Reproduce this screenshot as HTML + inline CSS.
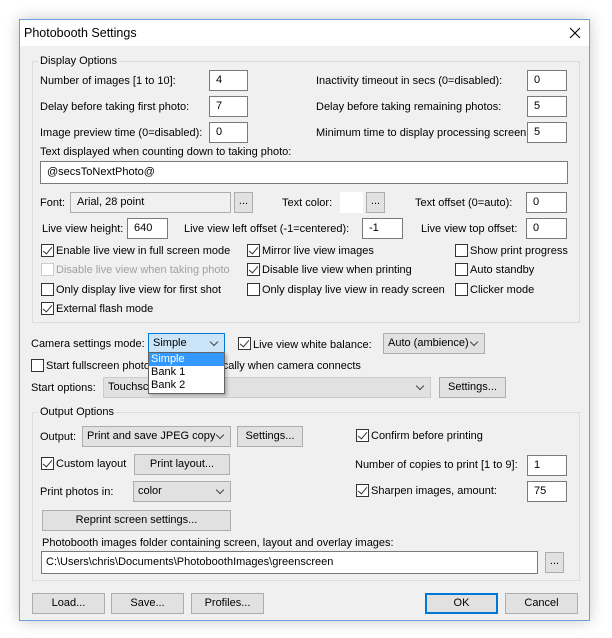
<!DOCTYPE html>
<html><head><meta charset="utf-8"><style>
*{box-sizing:border-box;margin:0;padding:0}
body{width:612px;height:638px;background:#fff;position:relative;overflow:hidden;font-family:"Liberation Sans",sans-serif;font-size:11px;color:#000}
.a{position:absolute;white-space:nowrap}
.win{position:absolute;left:19px;top:19px;width:571px;height:602px;background:#f0f0f0;border:1px solid #6f9fd8;box-shadow:0 0 14px rgba(0,0,0,.22)}
.title{position:absolute;left:19px;top:19px;width:571px;height:27px;background:#fff;border:1px solid #6f9fd8;border-bottom:none}
.grp{position:absolute;border:1px solid #dcdcdc}
.lbl{position:absolute;white-space:nowrap;line-height:14px}
.in{position:absolute;background:#fff;border:1px solid #7a7a7a;height:21px;padding-left:6px;line-height:19px;white-space:nowrap}
.btn{position:absolute;background:#e1e1e1;border:1px solid #adadad;height:21px;text-align:center;line-height:19px}
.sel{position:absolute;background:#e1e1e1;border:1px solid #adadad;height:21px;padding-left:4px;line-height:19px}
.sel:after{content:"";position:absolute;right:7px;top:5px;width:5px;height:5px;border-right:1px solid #444;border-bottom:1px solid #444;transform:rotate(45deg)}
.cb{position:absolute;width:13px;height:13px;border:1px solid #333;background:#fff}
.cb.c:after{content:"";position:absolute;left:3px;top:0px;width:4px;height:8px;border-right:1.5px solid #333;border-bottom:1.5px solid #333;transform:rotate(40deg)}
.gl{background:#f0f0f0;padding:0 2px}
</style></head><body>
<div class="win"></div>
<div class="title"></div>
<div class="lbl" style="left:24px;top:26px;font-size:12.5px">Photobooth Settings</div>
<svg class="a" style="left:569px;top:27px" width="12" height="12"><path d="M1 1L11 11M11 1L1 11" stroke="#000" stroke-width="1.1"/></svg>

<div class="grp" style="left:32px;top:61px;width:548px;height:262px"></div>
<div class="lbl gl" style="left:38px;top:54px">Display Options</div>
<div class="lbl" style="left:40px;top:74px">Number of images [1 to 10]:</div><div class="in" style="left:209px;top:70px;width:39px">4</div>
<div class="lbl" style="left:316px;top:74px">Inactivity timeout in secs (0=disabled):</div><div class="in" style="left:527px;top:70px;width:40px">0</div>
<div class="lbl" style="left:40px;top:100px">Delay before taking first photo:</div><div class="in" style="left:209px;top:96px;width:39px">7</div>
<div class="lbl" style="left:316px;top:100px">Delay before taking remaining photos:</div><div class="in" style="left:527px;top:96px;width:40px">5</div>
<div class="lbl" style="left:40px;top:126px">Image preview time (0=disabled):</div><div class="in" style="left:209px;top:122px;width:39px">0</div>
<div class="lbl" style="left:316px;top:126px">Minimum time to display processing screen:</div><div class="in" style="left:527px;top:122px;width:40px">5</div>
<div class="lbl" style="left:40px;top:145px">Text displayed when counting down to taking photo:</div>
<div class="in" style="left:40px;top:161px;width:528px;height:23px;line-height:21px">@secsToNextPhoto@</div>
<div class="lbl" style="left:40px;top:196px">Font:</div>
<div class="in" style="left:70px;top:192px;width:161px;background:#f0f0f0;border-color:#adadad">Arial, 28 point</div>
<div class="btn" style="left:234px;top:192px;width:19px;line-height:16px">...</div>
<div class="lbl" style="left:282px;top:196px">Text color:</div>
<div class="a" style="left:340px;top:192px;width:23px;height:21px;background:#fff"></div>
<div class="btn" style="left:366px;top:192px;width:19px;line-height:16px">...</div>
<div class="lbl" style="left:415px;top:196px">Text offset (0=auto):</div><div class="in" style="left:526px;top:192px;width:41px">0</div>
<div class="lbl" style="left:42px;top:222px">Live view height:</div><div class="in" style="left:127px;top:218px;width:41px">640</div>
<div class="lbl" style="left:184px;top:222px">Live view left offset (-1=centered):</div><div class="in" style="left:362px;top:218px;width:41px">-1</div>
<div class="lbl" style="left:421px;top:222px">Live view top offset:</div><div class="in" style="left:526px;top:218px;width:41px">0</div>

<div class="cb c" style="left:41px;top:244px"></div><div class="lbl" style="left:56px;top:244px">Enable live view in full screen mode</div>
<div class="cb" style="left:41px;top:263px;border-color:#ccc"></div><div class="lbl" style="left:56px;top:263px;color:#a0a0a0">Disable live view when taking photo</div>
<div class="cb" style="left:41px;top:283px"></div><div class="lbl" style="left:56px;top:283px">Only display live view for first shot</div>
<div class="cb c" style="left:41px;top:302px"></div><div class="lbl" style="left:56px;top:302px">External flash mode</div>
<div class="cb c" style="left:247px;top:244px"></div><div class="lbl" style="left:262px;top:244px">Mirror live view images</div>
<div class="cb c" style="left:247px;top:263px"></div><div class="lbl" style="left:262px;top:263px">Disable live view when printing</div>
<div class="cb" style="left:247px;top:283px"></div><div class="lbl" style="left:262px;top:283px">Only display live view in ready screen</div>
<div class="cb" style="left:455px;top:244px"></div><div class="lbl" style="left:470px;top:244px">Show print progress</div>
<div class="cb" style="left:455px;top:263px"></div><div class="lbl" style="left:470px;top:263px">Auto standby</div>
<div class="cb" style="left:455px;top:283px"></div><div class="lbl" style="left:470px;top:283px">Clicker mode</div>

<div class="lbl" style="left:31px;top:337px">Camera settings mode:</div>
<div class="sel" style="left:148px;top:333px;width:77px;background:#cce4f7;border-color:#0078d7">Simple</div>
<div class="cb c" style="left:238px;top:337px"></div><div class="lbl" style="left:253px;top:338px">Live view white balance:</div>
<div class="sel" style="left:383px;top:333px;width:102px">Auto (ambience)</div>
<div class="cb" style="left:31px;top:359px"></div><div class="lbl" style="left:46px;top:359px">Start fullscreen photobooth automatically when camera connects</div>
<div class="lbl" style="left:31px;top:381px">Start options:</div>
<div class="sel" style="left:103px;top:377px;width:328px;border-color:#ccc">Touchscreen</div>
<div class="btn" style="left:439px;top:377px;width:67px">Settings...</div>
<div class="a" style="left:148px;top:352px;width:77px;height:42px;background:#fff;border:1px solid #646464;box-shadow:2px 2px 3px rgba(0,0,0,.25)">
<div style="background:#3399ff;color:#fff;height:13px;line-height:13px;padding-left:2px">Simple</div>
<div style="height:13px;line-height:13px;padding-left:2px">Bank 1</div>
<div style="height:13px;line-height:13px;padding-left:2px">Bank 2</div></div>

<div class="grp" style="left:32px;top:412px;width:548px;height:169px"></div>
<div class="lbl gl" style="left:38px;top:405px">Output Options</div>
<div class="lbl" style="left:40px;top:430px">Output:</div>
<div class="sel" style="left:82px;top:426px;width:149px">Print and save JPEG copy</div>
<div class="btn" style="left:237px;top:426px;width:66px">Settings...</div>
<div class="cb c" style="left:356px;top:429px"></div><div class="lbl" style="left:371px;top:429px">Confirm before printing</div>
<div class="cb c" style="left:41px;top:457px"></div><div class="lbl" style="left:56px;top:457px">Custom layout</div>
<div class="btn" style="left:134px;top:454px;width:96px">Print layout...</div>
<div class="lbl" style="left:355px;top:458px">Number of copies to print [1 to 9]:</div><div class="in" style="left:527px;top:455px;width:40px">1</div>
<div class="lbl" style="left:40px;top:485px">Print photos in:</div>
<div class="sel" style="left:133px;top:481px;width:98px">color</div>
<div class="cb c" style="left:356px;top:484px"></div><div class="lbl" style="left:371px;top:484px">Sharpen images, amount:</div>
<div class="in" style="left:527px;top:481px;width:40px">75</div>
<div class="btn" style="left:42px;top:510px;width:189px">Reprint screen settings...</div>
<div class="lbl" style="left:42px;top:536px">Photobooth images folder containing screen, layout and overlay images:</div>
<div class="in" style="left:41px;top:551px;width:497px;height:23px;line-height:21px;padding-left:4px">C:\Users\chris\Documents\PhotoboothImages\greenscreen</div>
<div class="btn" style="left:545px;top:552px;width:19px;line-height:16px">...</div>

<div class="btn" style="left:32px;top:593px;width:73px">Load...</div>
<div class="btn" style="left:111px;top:593px;width:73px">Save...</div>
<div class="btn" style="left:191px;top:593px;width:73px">Profiles...</div>
<div class="btn" style="left:425px;top:593px;width:73px;border:2px solid #0078d7;line-height:17px">OK</div>
<div class="btn" style="left:505px;top:593px;width:73px">Cancel</div>
</body></html>
